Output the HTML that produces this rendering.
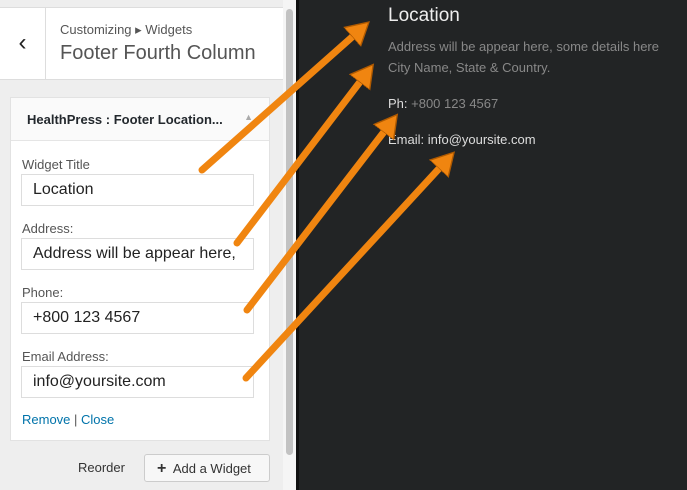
<!DOCTYPE html>
<html><head><style>
*{margin:0;padding:0;box-sizing:border-box}
body{width:687px;height:490px;overflow:hidden;background:#222425;position:relative;font-family:"Liberation Sans",sans-serif}
#side{position:absolute;left:0;top:0;width:296px;height:490px;background:#eeeeee}
#top{position:absolute;left:0;top:7px;width:283px;height:73px;background:#fff;border-top:1px solid #ddd;border-bottom:1px solid #ddd}
#back{position:absolute;left:0;top:0;width:46px;height:72px;border-right:1px solid #ddd;font-size:24px;text-align:center;line-height:70px;color:#222}
.t1{position:absolute;left:60px;top:14px;font-size:13px;color:#555}
.t2{position:absolute;left:60px;top:34px;font-size:20px;color:#555}
#sb{position:absolute;left:283px;top:0;width:13px;height:490px;background:#f5f5f5}
#th{position:absolute;left:3px;top:9px;width:7px;height:446px;border-radius:4px;background:#c2c2c2}
#box{position:absolute;left:10px;top:97px;width:260px;height:344px;background:#fff;border:1px solid #e2e2e2}
#bh{height:43px;border-bottom:1px solid #e5e5e5;background:#fafafa;padding:14px 16px;font-size:13px;font-weight:bold;color:#23282d}
.lab{position:absolute;left:11px;font-size:13px;color:#555}
.inp{position:absolute;left:10px;width:233px;height:32px;border:1px solid #ddd;font-size:16px;padding:6px 11px;color:#222;white-space:nowrap;overflow:hidden}
a{color:#0073aa;text-decoration:none}
#btn{position:absolute;left:144px;top:454px;width:126px;height:28px;border:1px solid #ccc;background:#f7f7f7;border-radius:3px;font-size:13px;color:#333;padding:5px 0 0 12px}
#dark{position:absolute;left:296px;top:0;width:3px;height:490px;background:#111}
.r{position:absolute;left:388px;color:#888;font-size:13px}
</style></head><body>
<div id="side">
<div style="position:absolute;left:0;top:0;width:283px;height:7px;background:#eee"></div>
<div id="top"><div id="back">‹</div><div class="t1">Customizing ▸ Widgets</div><div class="t2">Footer Fourth Column</div></div>
<div id="box"><div id="bh">HealthPress : Footer Location... <span style="float:right;color:#aaa;font-size:9px">▲</span></div>
<div class="lab" style="top:59px">Widget Title</div><div class="inp" style="top:76px">Location</div>
<div class="lab" style="top:123px">Address:</div><div class="inp" style="top:140px">Address will be appear here,</div>
<div class="lab" style="top:187px">Phone:</div><div class="inp" style="top:204px">+800 123 4567</div>
<div class="lab" style="top:251px">Email Address:</div><div class="inp" style="top:268px">info@yoursite.com</div>
<div style="position:absolute;left:11px;top:314px;font-size:13px;color:#555"><a>Remove</a> | <a>Close</a></div>
</div>
<div style="position:absolute;left:78px;top:460px;font-size:13px;color:#333">Reorder</div>
<div id="btn"><b style="font-size:16px">+</b>&nbsp; Add a Widget</div>
</div>
<div id="sb"><div id="th"></div></div>
<div id="dark"></div>
<div class="r" style="top:5px;font-size:19px;color:#eee">Location</div>
<div class="r" style="top:39px">Address will be appear here, some details here</div>
<div class="r" style="top:60px">City Name, State &amp; Country.</div>
<div class="r" style="top:96px"><span style="color:#ddd">Ph:</span> +800 123 4567</div>
<div class="r" style="top:132px;color:#ddd">Email: info@yoursite.com</div>
<svg width="687" height="490" style="position:absolute;left:0;top:0">
<defs><marker id="m" markerWidth="4" markerHeight="4" refX="1.5" refY="2" orient="auto" markerUnits="strokeWidth"><path d="M0,0.2 L3.2,2 L0,3.8 Z" fill="#f08510" stroke="#b05a00" stroke-width="0.2"/></marker></defs>
<g stroke="#f08510" stroke-width="7" stroke-linecap="round" fill="none">
<line x1="202" y1="170" x2="360" y2="30" marker-end="url(#m)"/>
<line x1="237" y1="243" x2="366" y2="74" marker-end="url(#m)"/>
<line x1="247" y1="310" x2="390" y2="124" marker-end="url(#m)"/>
<line x1="246" y1="378" x2="446" y2="161" marker-end="url(#m)"/>
</g></svg>
</body></html>
